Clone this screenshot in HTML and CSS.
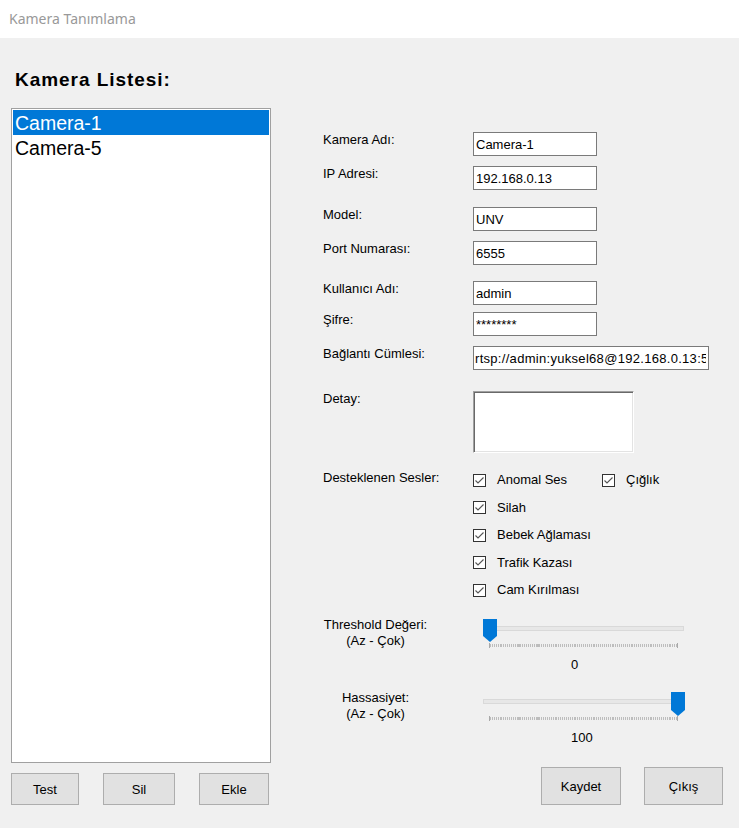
FILE: index.html
```html
<!DOCTYPE html>
<html lang="tr">
<head>
<meta charset="utf-8">
<title>Kamera Tanımlama</title>
<link rel="stylesheet" href="styles.css">
</head>
<body>
<div class="window">
  <div class="titlebar"><span class="title">Kamera Tanımlama</span></div>
  <div class="client">
    <div class="left">
      <h1 class="list-title">Kamera Listesi:</h1>
      <div class="listbox">
        <div class="item selected">Camera-1</div>
        <div class="item">Camera-5</div>
      </div>
      <div class="left-btns">
        <button class="btn btn-test">Test</button>
        <button class="btn btn-sil">Sil</button>
        <button class="btn btn-ekle">Ekle</button>
      </div>
    </div>
    <div class="right">
      <div class="form">
        <div class="row row-first"><label>Kamera Adı:</label><input class="tb" type="text" value="Camera-1"></div>
        <div class="row row-near"><label>IP Adresi:</label><input class="tb" type="text" value="192.168.0.13"></div>
        <div class="row row-far"><label>Model:</label><input class="tb" type="text" value="UNV"></div>
        <div class="row row-near"><label>Port Numarası:</label><input class="tb" type="text" value="6555"></div>
        <div class="row row-mid"><label>Kullanıcı Adı:</label><input class="tb" type="text" value="admin"></div>
        <div class="row row-tight"><label>Şifre:</label><input class="tb" type="text" value="********"></div>
        <div class="row row-near"><label>Bağlantı Cümlesi:</label><input class="tb tb-wide" type="text" value="rtsp://admin:yuksel68@192.168.0.13:554/unicast/c1/s0/live"></div>
        <div class="row row-detail"><label>Detay:</label><div class="tb-multi"></div></div>
        <div class="row row-sounds">
          <label>Desteklenen Sesler:</label>
          <div class="checks">
            <div class="chk"><svg class="box" width="13" height="13" viewBox="0 0 13 13"><rect x="0.5" y="0.5" width="12" height="12" fill="#fff" stroke="#333"/><polyline points="2.5,6.5 5,9 10.5,3.5" fill="none" stroke="#555" stroke-width="1.1"/></svg><span>Anomal Ses</span></div>
            <div class="chk"><svg class="box" width="13" height="13" viewBox="0 0 13 13"><rect x="0.5" y="0.5" width="12" height="12" fill="#fff" stroke="#333"/><polyline points="2.5,6.5 5,9 10.5,3.5" fill="none" stroke="#555" stroke-width="1.1"/></svg><span>Çığlık</span></div>
            <div class="chk"><svg class="box" width="13" height="13" viewBox="0 0 13 13"><rect x="0.5" y="0.5" width="12" height="12" fill="#fff" stroke="#333"/><polyline points="2.5,6.5 5,9 10.5,3.5" fill="none" stroke="#555" stroke-width="1.1"/></svg><span>Silah</span></div>
            <div class="chk chk-single"><svg class="box" width="13" height="13" viewBox="0 0 13 13"><rect x="0.5" y="0.5" width="12" height="12" fill="#fff" stroke="#333"/><polyline points="2.5,6.5 5,9 10.5,3.5" fill="none" stroke="#555" stroke-width="1.1"/></svg><span>Bebek Ağlaması</span></div>
            <div class="chk chk-single"><svg class="box" width="13" height="13" viewBox="0 0 13 13"><rect x="0.5" y="0.5" width="12" height="12" fill="#fff" stroke="#333"/><polyline points="2.5,6.5 5,9 10.5,3.5" fill="none" stroke="#555" stroke-width="1.1"/></svg><span>Trafik Kazası</span></div>
            <div class="chk chk-single"><svg class="box" width="13" height="13" viewBox="0 0 13 13"><rect x="0.5" y="0.5" width="12" height="12" fill="#fff" stroke="#333"/><polyline points="2.5,6.5 5,9 10.5,3.5" fill="none" stroke="#555" stroke-width="1.1"/></svg><span>Cam Kırılması</span></div>
          </div>
        </div>
        <div class="srow srow-first">
          <div class="slabel">Threshold Değeri:<br>(Az - Çok)</div>
          <div class="swrap">
            <div class="slider">
              <div class="track"></div>
              <div class="ticks"></div>
              <svg class="thumb" style="left:0px" width="14" height="23" viewBox="0 0 14 23"><polygon points="0,0 14,0 14,17 7,23 0,17" fill="#0078d7"/></svg>
            </div>
            <div class="value">0</div>
          </div>
        </div>
        <div class="srow srow-second">
          <div class="slabel">Hassasiyet:<br>(Az - Çok)</div>
          <div class="swrap">
            <div class="slider">
              <div class="track"></div>
              <div class="ticks"></div>
              <svg class="thumb" style="left:188px" width="14" height="24" viewBox="0 0 14 24"><polygon points="0,0 14,0 14,18 7,24 0,18" fill="#0078d7"/></svg>
            </div>
            <div class="value">100</div>
          </div>
        </div>
      </div>
      <div class="right-btns">
        <button class="btn btn-kaydet">Kaydet</button>
        <button class="btn btn-cikis">Çıkış</button>
      </div>
    </div>
  </div>
</div>
</body>
</html>
```
FILE: styles.css
```css
html, body {
  margin: 0;
  padding: 0;
  background: #f0f0f0;
}

.window {
  width: 739px;
  height: 828px;
  display: flex;
  flex-direction: column;
  font-family: "Liberation Sans", Arial, sans-serif;
  font-size: 13px;
  line-height: 16px;
  color: #000;
  overflow: hidden;
}

.titlebar {
  height: 38px;
  flex: none;
  background: #fff;
  padding-left: 9px;
  line-height: 38px;
}

.title {
  font-family: "Noto Sans", "Open Sans", sans-serif;
  font-size: 14px;
  color: #999;
}

.client {
  flex: 1;
  display: grid;
  grid-template-columns: 260px 400px;
  column-gap: 52px;
  padding: 31px 16px 23px 11px;
}

.left {
  display: flex;
  flex-direction: column;
}

.list-title {
  margin: 0;
  padding-left: 4px;
  font-size: 19px;
  line-height: 22px;
  font-weight: bold;
  letter-spacing: 0.95px;
}

.listbox {
  margin-top: 17px;
  height: 655px;
  box-sizing: border-box;
  border: 1px solid #a0a0a0;
  padding: 1px;
  background: #fff;
}

.item {
  height: 25px;
  line-height: 26px;
  padding-left: 2px;
  font-size: 19.5px;
  white-space: nowrap;
}

.item.selected {
  background: #0078d7;
  color: #fff;
}

.left-btns {
  margin-top: 10px;
  display: flex;
  justify-content: space-between;
  padding-right: 2px;
}

.btn {
  margin: 0;
  padding: 0;
  box-sizing: border-box;
  background: #e1e1e1;
  border: 1px solid #adadad;
  font-family: "Liberation Sans", Arial, sans-serif;
  font-size: 13px;
  color: #000;
}

.btn-test { width: 68px; height: 32px; }
.btn-sil { width: 72px; height: 32px; }
.btn-ekle { width: 70px; height: 32px; }
.btn-kaydet { width: 80px; height: 38px; }
.btn-cikis { width: 79px; height: 38px; }

.right {
  display: flex;
  flex-direction: column;
}

.form {
  margin-top: 63px;
  display: flex;
  flex-direction: column;
}

.row {
  display: grid;
  grid-template-columns: 150px auto;
  align-items: start;
}

.row label {
  display: block;
  white-space: nowrap;
}

.row-first { margin-top: 0; }
.row-near { margin-top: 10px; }
.row-far { margin-top: 17px; }
.row-mid { margin-top: 16px; }
.row-tight { margin-top: 7px; }
.row-detail { margin-top: 21px; }
.row-sounds { margin-top: 17px; }

.tb {
  width: 124px;
  height: 24px;
  box-sizing: border-box;
  margin: 0;
  padding: 0 2px;
  border: 1px solid #7a7a7a;
  background: #fff;
  font-family: "Liberation Sans", Arial, sans-serif;
  font-size: 13px;
  color: #000;
  outline: none;
}

.tb-wide {
  width: 236px;
  padding-left: 1px;
  letter-spacing: 0.3px;
}

.tb-multi {
  width: 161px;
  height: 62px;
  box-sizing: border-box;
  background: #fff;
  border: 1px solid;
  border-color: #a0a0a0 #fff #fff #a0a0a0;
  box-shadow: inset 1px 1px 0 #696969, inset -1px -1px 0 #e3e3e3;
}

.checks {
  padding-top: 2px;
  display: grid;
  grid-template-columns: 129px auto;
  grid-auto-rows: 16px;
  row-gap: 11.5px;
}

.chk {
  display: flex;
  align-items: center;
  gap: 11px;
  white-space: nowrap;
}

.chk .box {
  flex: none;
  display: block;
}

.chk-single {
  grid-column: 1;
}

.srow {
  display: grid;
  grid-template-columns: 160px 202px;
  align-items: start;
}

.srow-first { margin-top: 19px; }
.srow-second { margin-top: 17px; }

.slabel {
  width: 105px;
  text-align: center;
  white-space: nowrap;
}

.swrap {
  padding-top: 2px;
}

.slider {
  position: relative;
  height: 30px;
}

.track {
  position: absolute;
  left: 0;
  right: 1px;
  top: 7px;
  height: 5px;
  box-sizing: border-box;
  background: #e7e7e7;
  border: 1px solid #d9d9d9;
}

.ticks {
  position: absolute;
  left: 6px;
  right: 7px;
  top: 24px;
  height: 5px;
  box-sizing: border-box;
  border-left: 1px solid #a9a9a9;
  border-right: 1px solid #a9a9a9;
  background-image: repeating-linear-gradient(90deg, #bdbdbd 0 1px, transparent 1px 1.9px);
  background-size: 100% 3px;
  background-repeat: no-repeat;
  background-position: 0 1px;
}

.thumb {
  position: absolute;
  top: 0;
  display: block;
}

.value {
  margin-top: 8px;
  padding-left: 88px;
}

.right-btns {
  margin-top: auto;
  display: flex;
  justify-content: flex-end;
  gap: 23px;
}
```
